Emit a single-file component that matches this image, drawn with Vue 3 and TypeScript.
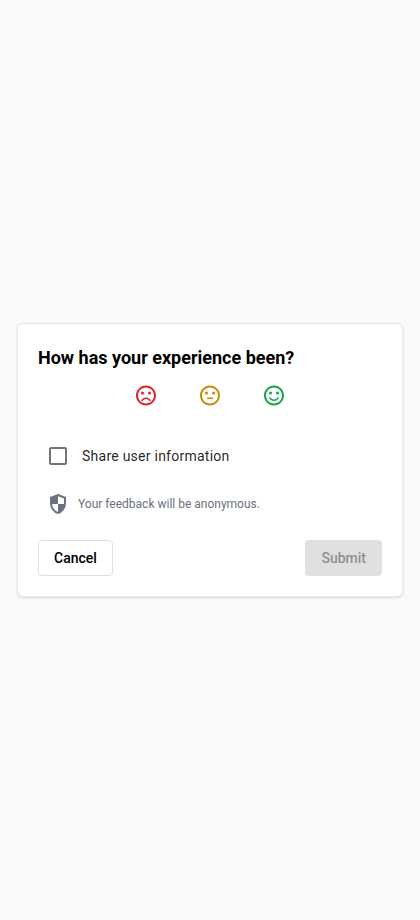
<script setup lang="ts">
import { ref } from 'vue'

interface Mood { name: string; mouth: string }

const moods: Mood[] = [
  { name: 'bad', mouth: 'M12 14c-2.33 0-4.32 1.45-5.12 3.5h1.67c.69-1.19 1.97-2 3.45-2s2.75.81 3.45 2h1.67c-.8-2.05-2.79-3.5-5.12-3.5z' },
  { name: 'neutral', mouth: 'M9 14h6v1.5H9z' },
  { name: 'good', mouth: 'M12 16c-1.48 0-2.75-.81-3.45-2H6.88c.8 2.05 2.79 3.5 5.12 3.5s4.32-1.45 5.12-3.5h-1.67c-.7 1.19-1.97 2-3.45 2z' },
]
const shared = ref(false)
</script>

<template>
  <main class="page">
    <section class="card">
      <h1 class="title">How has your experience been?</h1>
      <div class="moods">
        <button v-for="m in moods" :key="m.name" class="mood" :class="m.name">
          <svg viewBox="0 -0.5 24 24" width="24" height="24" fill="currentColor">
            <circle cx="15.5" cy="9.5" r="1.5" />
            <circle cx="8.5" cy="9.5" r="1.5" />
            <path :d="m.mouth" />
            <path d="M11.99 2C6.47 2 2 6.48 2 12s4.47 10 9.99 10C17.52 22 22 17.52 22 12S17.52 2 11.99 2zM12 20c-4.42 0-8-3.58-8-8s3.58-8 8-8 8 3.58 8 8-3.58 8-8 8z" />
          </svg>
        </button>
      </div>
      <label class="share">
        <input v-model="shared" class="box" type="checkbox" />
        <span>Share user information</span>
      </label>
      <div class="note">
        <svg viewBox="0 0 24 24" width="24" height="24" fill="currentColor" fill-rule="evenodd">
          <path d="M12 22q-3.475-.875-5.738-3.988T4 11.1V5l8-3 8 3v6.1q0 3.8-2.262 6.912T12 22zm0-2.1V12h5.95q.05-.275.05-.45V6.375l-6-2.25V12H6.05q.275 2.725 1.9 4.938T12 19.9z" />
        </svg>
        <span>Your feedback will be anonymous.</span>
      </div>
      <div class="actions">
        <button class="btn cancel">Cancel</button>
        <button class="btn submit" disabled>Submit</button>
      </div>
    </section>
  </main>
</template>

<style>
body { background: #fafafa; }
</style>

<style scoped>
.page {
  box-sizing: border-box;
  min-height: 100vh;
  padding: 0 17px;
  display: flex;
  align-items: center;
  font-family: Roboto, sans-serif;
}
.card {
  box-sizing: border-box;
  width: 100%;
  height: 274px;
  padding: 20px;
  display: flex;
  flex-direction: column;
  background: #fff;
  border: 1px solid #e5e7eb;
  border-radius: 6px;
  box-shadow: 0 1px 3px rgba(0, 0, 0, 0.1), 0 1px 2px -1px rgba(0, 0, 0, 0.1);
}
.title {
  margin: 0;
  font-size: 18px;
  font-weight: 700;
  line-height: 28px;
  color: #000;
}
.moods {
  display: flex;
  justify-content: center;
  gap: 40px;
  margin-top: 11px;
}
.mood {
  width: 24px;
  height: 24px;
  padding: 0;
  border: 0;
  background: none;
}
.mood svg { display: block; }
.bad { color: #dc2626; }
.neutral { color: #ca8a04; }
.good { color: #16a34a; }
.share {
  display: flex;
  align-items: center;
  gap: 15px;
  height: 40px;
  margin-top: 29px;
  padding-left: 11px;
  font-size: 14px;
  letter-spacing: 0.25px;
  color: rgba(0, 0, 0, 0.87);
}
.box {
  appearance: none;
  box-sizing: border-box;
  width: 18px;
  height: 18px;
  margin: 0;
  border: 2px solid #757575;
  border-radius: 2px;
}
.box:checked { background: #757575; }
.note {
  display: flex;
  align-items: center;
  gap: 8px;
  height: 24px;
  margin-top: 16px;
  padding-left: 8px;
  font-size: 12px;
  color: #6b7280;
}
.actions {
  display: flex;
  justify-content: space-between;
  margin-top: 24px;
}
.btn {
  box-sizing: border-box;
  height: 36px;
  padding: 0 15px;
  font: 500 14px/20px Roboto, sans-serif;
  border: 1px solid #e0e0e0;
  border-radius: 4px;
}
.cancel { color: #000; background: #fff; }
.submit { padding: 0 16px; border: 0; color: #8f8f8f; background: #e0e0e0; }
</style>
